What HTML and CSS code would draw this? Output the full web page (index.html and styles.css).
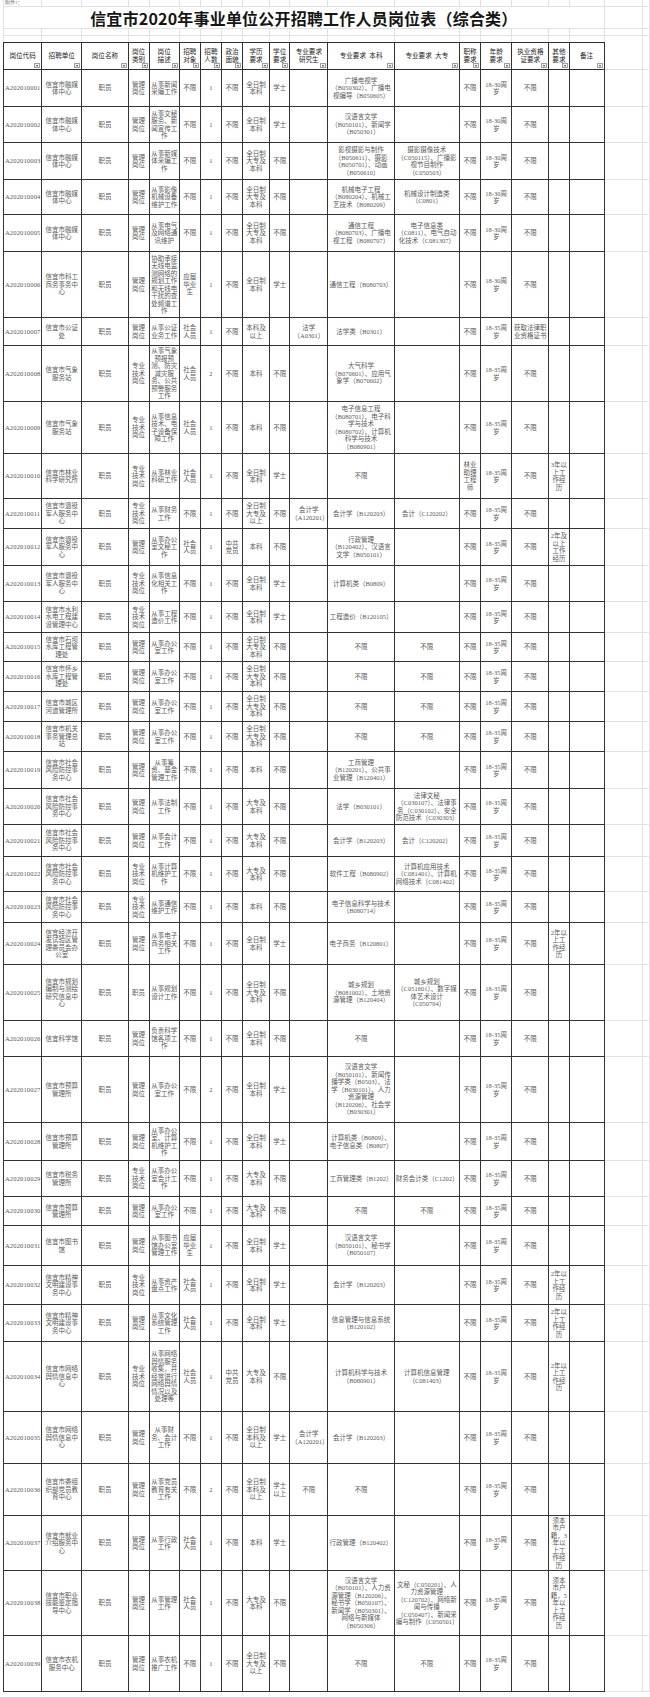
FILE: index.html
```html
<!DOCTYPE html>
<html lang="zh-CN">
<head>
<meta charset="utf-8">
<title>信宜市2020年事业单位公开招聘工作人员岗位表（综合类）</title>
<link rel="stylesheet" href="styles.css">
</head>
<body>
<table class="sheet">
<colgroup>
<col class="c39"><col class="c40"><col class="c46"><col class="c21"><col class="c30"><col class="c21"><col class="c21"><col class="c21"><col class="c27"><col class="c20"><col class="c38"><col class="c66"><col class="c65"><col class="c21"><col class="c31"><col class="c37"><col class="c20"><col class="c35"><col class="c38"><col class="c7">
</colgroup>
<tbody>
<tr class="top h7"><td class="note">附件1：</td><td></td><td></td><td></td><td></td><td></td><td></td><td></td><td></td><td></td><td></td><td></td><td></td><td></td><td></td><td></td><td></td><td></td><td></td><td></td></tr>
<tr class="top h22"><td colspan="18" class="title">信宜市2020年事业单位公开招聘工作人员岗位表（综合类）</td><td></td><td></td></tr>
<tr class="top h7"><td></td><td></td><td></td><td></td><td></td><td></td><td></td><td></td><td></td><td></td><td></td><td></td><td></td><td></td><td></td><td></td><td></td><td></td><td></td><td></td></tr>
<tr class="top last h6"><td></td><td></td><td></td><td></td><td></td><td></td><td></td><td></td><td></td><td></td><td></td><td></td><td></td><td></td><td></td><td></td><td></td><td></td><td></td><td></td></tr>
<tr class="head h28">
<th>岗位代码<span class="flt"></span></th>
<th>招聘单位<span class="flt"></span></th>
<th>岗位名称<span class="flt"></span></th>
<th>岗位<br>类别<span class="flt"></span></th>
<th>岗位<br>描述<span class="flt"></span></th>
<th>招聘<br>对象<span class="flt"></span></th>
<th>招聘<br>人数<span class="flt"></span></th>
<th>政治<br>面貌<span class="flt"></span></th>
<th>学历<br>要求<span class="flt"></span></th>
<th>学位<br>要求<span class="flt"></span></th>
<th>专业要求<br>研究生<span class="flt"></span></th>
<th>专业要求&nbsp;&nbsp;本科<span class="flt"></span></th>
<th>专业要求&nbsp;&nbsp;大专<span class="flt"></span></th>
<th>职称<br>要求<span class="flt"></span></th>
<th>年龄<br>要求<span class="flt"></span></th>
<th>执业资格<br>证要求<span class="flt"></span></th>
<th>其他<br>要求<span class="flt"></span></th>
<th>备注<span class="flt"></span></th>
<td class="x"></td><td class="x"></td>
</tr>
<tr class="row h37"><td class="code">A202010001</td><td>信宜市融媒体中心</td><td>职员</td><td>管理岗位</td><td>从事新闻采编工作</td><td>不限</td><td>1</td><td>不限</td><td>全日制本科</td><td>学士</td><td></td><td>广播电视学（B050302）、广播电视编导（B050605）</td><td></td><td>不限</td><td>18-30周岁</td><td>不限</td><td></td><td></td><td class="x"></td><td class="x"></td></tr>
<tr class="row h36"><td class="code">A202010002</td><td>信宜市融媒体中心</td><td>职员</td><td>管理岗位</td><td>从事文秘服务、新闻宣传工作</td><td>不限</td><td>1</td><td>不限</td><td>全日制本科</td><td>学士</td><td></td><td>汉语言文学（B050101）、新闻学（B050301）</td><td></td><td>不限</td><td>18-30周岁</td><td>不限</td><td></td><td></td><td class="x"></td><td class="x"></td></tr>
<tr class="row h37"><td class="code">A202010003</td><td>信宜市融媒体中心</td><td>职员</td><td>管理岗位</td><td>从事新媒体采编工作</td><td>不限</td><td>1</td><td>不限</td><td>全日制大专及本科</td><td>不限</td><td></td><td>影视摄影与制作（B050611）、摄影（B050701）、动画（B050610）</td><td>摄影摄像技术（C050115）、广播影视节目制作（C050503）</td><td>不限</td><td>18-30周岁</td><td>不限</td><td></td><td></td><td class="x"></td><td class="x"></td></tr>
<tr class="row h35"><td class="code">A202010004</td><td>信宜市融媒体中心</td><td>职员</td><td>管理岗位</td><td>从事影像机械设备维护工作</td><td>不限</td><td>1</td><td>不限</td><td>全日制大专及本科</td><td>不限</td><td></td><td>机械电子工程（B080204）、机械工艺技术（B080209）</td><td>机械设计制造类（C0801）</td><td>不限</td><td>18-30周岁</td><td>不限</td><td></td><td></td><td class="x"></td><td class="x"></td></tr>
<tr class="row h37"><td class="code">A202010005</td><td>信宜市融媒体中心</td><td>职员</td><td>管理岗位</td><td>从事电气及网络通讯维护</td><td>不限</td><td>1</td><td>不限</td><td>全日制大专及本科</td><td>不限</td><td></td><td>通信工程（B080703）、广播电视工程（B080707）</td><td>电子信息类（C0811）、电气自动化技术（C081307）</td><td>不限</td><td>18-30周岁</td><td>不限</td><td></td><td></td><td class="x"></td><td class="x"></td></tr>
<tr class="row h66"><td class="code">A202010006</td><td>信宜市科工商务事务中心</td><td>职员</td><td>管理岗位</td><td>协助承接无线电监测网络的规划工作和无线电干扰的查处频谱工作</td><td>应届毕业生</td><td>1</td><td>不限</td><td>全日制本科</td><td>学士</td><td></td><td class="left">通信工程（B080703）</td><td></td><td>不限</td><td>18-30周岁</td><td>不限</td><td></td><td></td><td class="x"></td><td class="x"></td></tr>
<tr class="row h28"><td class="code">A202010007</td><td>信宜市公证处</td><td>职员</td><td>管理岗位</td><td>从事公证业务工作</td><td>社会人员</td><td>1</td><td>不限</td><td>本科及以上</td><td></td><td>法学（A0301）</td><td>法学类（B0301）</td><td></td><td>不限</td><td>18-35周岁</td><td>获取法律职业资格证书</td><td></td><td></td><td class="x"></td><td class="x"></td></tr>
<tr class="row h56"><td class="code">A202010008</td><td>信宜市气象服务站</td><td>职员</td><td>专业技术岗位</td><td>从事气象预报预测、防灾减灾服务、公共预警服务工作</td><td>社会人员</td><td>2</td><td>不限</td><td>本科</td><td>不限</td><td></td><td>大气科学（B070601）、应用气象学（B070602）</td><td></td><td>不限</td><td>18-35周岁</td><td>不限</td><td></td><td></td><td class="x"></td><td class="x"></td></tr>
<tr class="row h52"><td class="code">A202010009</td><td>信宜市气象服务站</td><td>职员</td><td>专业技术岗位</td><td>从事信息技术、电子设备保障工作</td><td>社会人员</td><td>1</td><td>不限</td><td>本科</td><td>不限</td><td></td><td>电子信息工程（B080701）、电子科学与技术（B080702）、计算机科学与技术（B080901）</td><td></td><td>不限</td><td>18-35周岁</td><td>不限</td><td></td><td></td><td class="x"></td><td class="x"></td></tr>
<tr class="row h45"><td class="code">A202010010</td><td>信宜市林业科学研究所</td><td>职员</td><td>专业技术岗位</td><td>从事林业科研工作</td><td>社会人员</td><td>1</td><td>不限</td><td>全日制本科</td><td>学士</td><td></td><td>不限</td><td></td><td>林业助理工程师</td><td>18-35周岁</td><td>不限</td><td>3年以上工作经历</td><td></td><td class="x"></td><td class="x"></td></tr>
<tr class="row h30"><td class="code">A202010011</td><td>信宜市退役军人服务中心</td><td>职员</td><td>专业技术岗位</td><td>从事财务工作</td><td>不限</td><td>1</td><td>不限</td><td>全日制大专及以上</td><td>不限</td><td>会计学（A120201）</td><td>会计学（B120203）</td><td>会计（C120202）</td><td>不限</td><td>18-35周岁</td><td>不限</td><td></td><td></td><td class="x"></td><td class="x"></td></tr>
<tr class="row h37"><td class="code">A202010012</td><td>信宜市退役军人服务中心</td><td>职员</td><td>管理岗位</td><td>从事办公室文秘工作</td><td>社会人员</td><td>1</td><td>中共党员</td><td>本科</td><td>不限</td><td></td><td>行政管理（B120402）、汉语言文学（B050101）</td><td></td><td>不限</td><td>18-35周岁</td><td>不限</td><td>2年及以上工作经历</td><td></td><td class="x"></td><td class="x"></td></tr>
<tr class="row h36"><td class="code">A202010013</td><td>信宜市退役军人服务中心</td><td>职员</td><td>专业技术岗位</td><td>从事信息化相关工作</td><td>不限</td><td>1</td><td>不限</td><td>全日制本科</td><td>学士</td><td></td><td>计算机类（B0809）</td><td></td><td>不限</td><td>18-35周岁</td><td>不限</td><td></td><td></td><td class="x"></td><td class="x"></td></tr>
<tr class="row h31"><td class="code">A202010014</td><td>信宜市水利水电工程建设管理中心</td><td>职员</td><td>专业技术岗位</td><td>从事工程造价工作</td><td>不限</td><td>1</td><td>不限</td><td>全日制本科</td><td>学士</td><td></td><td>工程造价（B120105）</td><td></td><td>不限</td><td>18-35周岁</td><td>不限</td><td></td><td></td><td class="x"></td><td class="x"></td></tr>
<tr class="row h29"><td class="code">A202010015</td><td>信宜市石坝水库工程管理处</td><td>职员</td><td>管理岗位</td><td>从事办公室工作</td><td>不限</td><td>1</td><td>不限</td><td>全日制大专及本科</td><td>不限</td><td></td><td>不限</td><td>不限</td><td>不限</td><td>18-35周岁</td><td>不限</td><td></td><td></td><td class="x"></td><td class="x"></td></tr>
<tr class="row h30"><td class="code">A202010016</td><td>信宜市怀乡水库工程管理处</td><td>职员</td><td>管理岗位</td><td>从事办公室工作</td><td>不限</td><td>1</td><td>不限</td><td>全日制大专及本科</td><td>不限</td><td></td><td>不限</td><td>不限</td><td>不限</td><td>18-35周岁</td><td>不限</td><td></td><td></td><td class="x"></td><td class="x"></td></tr>
<tr class="row h30"><td class="code">A202010017</td><td>信宜市城区河道管理所</td><td>职员</td><td>管理岗位</td><td>从事办公室工作</td><td>不限</td><td>1</td><td>不限</td><td>全日制大专及本科</td><td>不限</td><td></td><td>不限</td><td>不限</td><td>不限</td><td>18-35周岁</td><td>不限</td><td></td><td></td><td class="x"></td><td class="x"></td></tr>
<tr class="row h30"><td class="code">A202010018</td><td>信宜市机关事务管理总站</td><td>职员</td><td>管理岗位</td><td>从事办公室工作</td><td>不限</td><td>1</td><td>不限</td><td>全日制大专及本科</td><td>不限</td><td></td><td>不限</td><td>不限</td><td>不限</td><td>18-35周岁</td><td>不限</td><td></td><td></td><td class="x"></td><td class="x"></td></tr>
<tr class="row h37"><td class="code">A202010019</td><td>信宜市社会风险防控事务中心</td><td>职员</td><td>管理岗位</td><td>从事筹资、基金管理工作</td><td>不限</td><td>1</td><td>不限</td><td>本科</td><td>不限</td><td></td><td>工商管理（B120201）、公共事业管理（B120401）</td><td></td><td>不限</td><td>18-35周岁</td><td>不限</td><td></td><td></td><td class="x"></td><td class="x"></td></tr>
<tr class="row h36"><td class="code">A202010020</td><td>信宜市社会风险防控事务中心</td><td>职员</td><td>管理岗位</td><td>从事法制工作</td><td>不限</td><td>1</td><td>不限</td><td>大专及本科</td><td>不限</td><td></td><td>法学（B030101）</td><td>法律文秘（C030107）、法律事务（C030102）、安全防范技术（C030303）</td><td>不限</td><td>18-35周岁</td><td>不限</td><td></td><td></td><td class="x"></td><td class="x"></td></tr>
<tr class="row h32"><td class="code">A202010021</td><td>信宜市社会风险防控事务中心</td><td>职员</td><td>管理岗位</td><td>从事会计工作</td><td>不限</td><td>1</td><td>不限</td><td>大专及本科</td><td>不限</td><td></td><td>会计学（B120203）</td><td>会计（C120202）</td><td>不限</td><td>18-35周岁</td><td>不限</td><td></td><td></td><td class="x"></td><td class="x"></td></tr>
<tr class="row h35"><td class="code">A202010022</td><td>信宜市社会风险防控事务中心</td><td>职员</td><td>专业技术岗位</td><td>从事计算机维护工作</td><td>不限</td><td>1</td><td>不限</td><td>大专及本科</td><td>不限</td><td></td><td>软件工程（B080902）</td><td>计算机应用技术（C081401）、计算机网络技术（C081402）</td><td>不限</td><td>18-35周岁</td><td>不限</td><td></td><td></td><td class="x"></td><td class="x"></td></tr>
<tr class="row h31"><td class="code">A202010023</td><td>信宜市社会风险防控事务中心</td><td>职员</td><td>专业技术岗位</td><td>从事通信维护工作</td><td>不限</td><td>1</td><td>不限</td><td>本科</td><td>不限</td><td></td><td>电子信息科学与技术（B080714）</td><td></td><td>不限</td><td>18-35周岁</td><td>不限</td><td></td><td></td><td class="x"></td><td class="x"></td></tr>
<tr class="row h42"><td class="code">A202010024</td><td>信宜经济开发试验区管理委员会办公室</td><td>职员</td><td>管理岗位</td><td>从事电子商务相关工作</td><td>不限</td><td>1</td><td>不限</td><td>全日制本科</td><td>学士</td><td></td><td class="left">电子商务（B120801）</td><td></td><td>不限</td><td>18-35周岁</td><td>不限</td><td>2年以上工作经历</td><td></td><td class="x"></td><td class="x"></td></tr>
<tr class="row h56"><td class="code">A202010025</td><td>信宜市规划编制与测绘研究信息中心</td><td>职员</td><td>职员</td><td>从事规划设计工作</td><td>不限</td><td>1</td><td>不限</td><td>全日制大专及本科</td><td>不限</td><td></td><td>城乡规划（B081002）、土地资源管理（B120404）</td><td>城乡规划（C051601）、数字媒体艺术设计（C050704）</td><td>不限</td><td>18-35周岁</td><td>不限</td><td></td><td></td><td class="x"></td><td class="x"></td></tr>
<tr class="row h36"><td class="code">A202010026</td><td>信宜科学馆</td><td>职员</td><td>管理岗位</td><td>负责科学馆各项工作</td><td>不限</td><td>1</td><td>不限</td><td>全日制本科</td><td>不限</td><td></td><td>不限</td><td></td><td>不限</td><td>18-35周岁</td><td>不限</td><td></td><td></td><td class="x"></td><td class="x"></td></tr>
<tr class="row h66"><td class="code">A202010027</td><td>信宜市预算管理所</td><td>职员</td><td>管理岗位</td><td>从事办公室工作</td><td>不限</td><td>2</td><td>不限</td><td>全日制本科</td><td>学士</td><td></td><td>汉语言文学（B050101）、新闻传播学类（B0503）、法学（B030101）、人力资源管理（B120206）、社会学（B030301）</td><td></td><td>不限</td><td>18-35周岁</td><td>不限</td><td></td><td></td><td class="x"></td><td class="x"></td></tr>
<tr class="row h38"><td class="code">A202010028</td><td>信宜市预算管理所</td><td>职员</td><td>管理岗位</td><td>从事办公室、计算机维护工作</td><td>不限</td><td>1</td><td>不限</td><td>全日制本科</td><td>学士</td><td></td><td>计算机类（B0809）、电子信息类（B0807）</td><td></td><td>不限</td><td>18-35周岁</td><td>不限</td><td></td><td></td><td class="x"></td><td class="x"></td></tr>
<tr class="row h36"><td class="code">A202010029</td><td>信宜市税务管理所</td><td>职员</td><td>专业技术岗位</td><td>从事办公室会计工作</td><td>不限</td><td>1</td><td>不限</td><td>大专及本科</td><td>不限</td><td></td><td>工商管理类（B1202）</td><td>财务会计类（C1202）</td><td>不限</td><td>18-35周岁</td><td>不限</td><td></td><td></td><td class="x"></td><td class="x"></td></tr>
<tr class="row h29"><td class="code">A202010030</td><td>信宜市预算管理所</td><td>职员</td><td>管理岗位</td><td>从事办公室工作</td><td>不限</td><td>1</td><td>不限</td><td>大专及本科</td><td>不限</td><td></td><td>不限</td><td>不限</td><td>不限</td><td>18-35周岁</td><td>不限</td><td></td><td></td><td class="x"></td><td class="x"></td></tr>
<tr class="row h40"><td class="code">A202010031</td><td>信宜市图书馆</td><td>职员</td><td>管理岗位</td><td>从事图书馆办公室管理工作</td><td>应届毕业生</td><td>1</td><td>不限</td><td>全日制本科</td><td>学士</td><td></td><td>汉语言文学（B050101）、秘书学（B050107）</td><td></td><td>不限</td><td>18-35周岁</td><td>不限</td><td></td><td></td><td class="x"></td><td class="x"></td></tr>
<tr class="row h39"><td class="code">A202010032</td><td>信宜市精神文明建设事务中心</td><td>职员</td><td>专业技术岗位</td><td>从事资产盘点工作</td><td>社会人员</td><td>1</td><td>不限</td><td>全日制本科</td><td>学士</td><td></td><td>会计学（B120203）</td><td></td><td>不限</td><td>18-35周岁</td><td>不限</td><td>2年以上工作经历</td><td></td><td class="x"></td><td class="x"></td></tr>
<tr class="row h37"><td class="code">A202010033</td><td>信宜市精神文明建设事务中心</td><td>职员</td><td>管理岗位</td><td>从事文化系统管理工作</td><td>社会人员</td><td>1</td><td>不限</td><td>全日制本科</td><td>学士</td><td></td><td>信息管理与信息系统（B120102）</td><td></td><td>不限</td><td>18-35周岁</td><td>不限</td><td>2年以上工作经历</td><td></td><td class="x"></td><td class="x"></td></tr>
<tr class="row h70"><td class="code">A202010034</td><td>信宜市网络舆情信息中心</td><td>职员</td><td>专业技术岗位</td><td>从事网络舆情服务收集，并经常进行网络舆情情况以及处理等</td><td>社会人员</td><td>1</td><td>中共党员</td><td>大专及本科</td><td>不限</td><td></td><td>计算机科学与技术（B080901）</td><td>计算机信息管理（C081403）</td><td>不限</td><td>18-35周岁</td><td>不限</td><td>2年以上工作经历</td><td></td><td class="x"></td><td class="x"></td></tr>
<tr class="row h52"><td class="code">A202010035</td><td>信宜市网络舆情信息中心</td><td>职员</td><td>管理岗位</td><td>从事财务、会计工作</td><td>不限</td><td>1</td><td>不限</td><td>全日制本科及以上</td><td>学士</td><td>会计学（A120201）</td><td>会计学（B120203）</td><td></td><td>不限</td><td>18-35周岁</td><td>不限</td><td></td><td></td><td class="x"></td><td class="x"></td></tr>
<tr class="row h52"><td class="code">A202010036</td><td>信宜市委组织部党员教育中心</td><td>职员</td><td>管理岗位</td><td>从事党员教育有关工作</td><td>不限</td><td>2</td><td>不限</td><td>全日制本科及以上</td><td>学士以上</td><td>不限</td><td>不限</td><td></td><td>不限</td><td>18-35周岁</td><td>不限</td><td></td><td></td><td class="x"></td><td class="x"></td></tr>
<tr class="row h55"><td class="code">A202010037</td><td>信宜市就业介绍服务中心</td><td>职员</td><td>管理岗位</td><td>从事行政工作</td><td>社会人员</td><td>1</td><td>不限</td><td>本科</td><td>学士</td><td></td><td class="left">行政管理（B120402）</td><td></td><td>不限</td><td>18-35周岁</td><td>不限</td><td>须本市户籍，3年以上工作经历</td><td></td><td class="x"></td><td class="x"></td></tr>
<tr class="row h65"><td class="code">A202010038</td><td>信宜市职业技能鉴定指导中心</td><td>职员</td><td>管理岗位</td><td>从事管理工作</td><td>社会人员</td><td>1</td><td>不限</td><td>大专及本科</td><td>不限</td><td></td><td>汉语言文学（B050101）、人力资源管理（B120206）、秘书学（B050107）、新闻学（B050301）、网络与新媒体（B050306）</td><td>文秘（C050201）、人力资源管理（C120702）、网络新闻与传播（C050407）、新闻采编与制作（C050501）</td><td>不限</td><td>18-35周岁</td><td>不限</td><td>须本市户籍，5年以上工作经历</td><td></td><td class="x"></td><td class="x"></td></tr>
<tr class="row h56"><td class="code">A202010039</td><td>信宜市农机服务中心</td><td>职员</td><td>管理岗位</td><td>从事农机推广工作</td><td>不限</td><td>1</td><td>不限</td><td>全日制大专及以上</td><td>不限</td><td></td><td>不限</td><td>不限</td><td>不限</td><td>18-35周岁</td><td>不限</td><td></td><td></td><td class="x"></td><td class="x"></td></tr>
</tbody>
</table>
</body>
</html>
```

FILE: styles.css
```css
* { box-sizing: border-box; }

body {
  margin: 0;
  background: #ffffff;
  font-family: "Liberation Serif", "Noto Sans CJK SC", serif;
  overflow: hidden;
}

.sheet {
  margin-left: 3px;
  width: 647px;
  table-layout: fixed;
  border-collapse: separate;
  border-spacing: 0;
}

.c39 { width: 39px; }
.c40 { width: 40px; }
.c46 { width: 46px; }
.c21 { width: 21px; }
.c30 { width: 30px; }
.c27 { width: 27px; }
.c20 { width: 20px; }
.c38 { width: 38px; }
.c66 { width: 66px; }
.c65 { width: 65px; }
.c31 { width: 31px; }
.c37 { width: 37px; }
.c35 { width: 35px; }
.c7  { width: 7px; }

.sheet td,
.sheet th {
  padding: 0 1px;
  text-align: center;
  vertical-align: middle;
  font-size: 6.5px;
  line-height: 7.5px;
  color: #5a5a5a;
  font-weight: normal;
  overflow: hidden;
  overflow-wrap: anywhere;
}

/* row heights */
.h6 { height: 6px; }
.h7 { height: 7px; }
.h22 { height: 22px; }
.h28 { height: 28px; }
.h29 { height: 29px; }
.h30 { height: 30px; }
.h31 { height: 31px; }
.h32 { height: 32px; }
.h35 { height: 35px; }
.h36 { height: 36px; }
.h37 { height: 37px; }
.h38 { height: 38px; }
.h39 { height: 39px; }
.h40 { height: 40px; }
.h42 { height: 42px; }
.h45 { height: 45px; }
.h52 { height: 52px; }
.h55 { height: 55px; }
.h56 { height: 56px; }
.h65 { height: 65px; }
.h66 { height: 66px; }
.h70 { height: 70px; }

/* spreadsheet area above the table */
.top td {
  border-right: 1px solid #e1e1e1;
  border-bottom: 1px solid #e1e1e1;
}
.top td:first-child { border-left: 1px solid #e1e1e1; }
.top.last td { border-bottom: none; }

.sheet .note {
  text-align: left;
  vertical-align: top;
  font-size: 5px;
  line-height: 6px;
  color: #777;
  overflow: visible;
  white-space: nowrap;
}

.sheet .title {
  font-family: "Noto Sans CJK SC", sans-serif;
  font-size: 16px;
  line-height: 20px;
  font-weight: 700;
  color: #161616;
  letter-spacing: 0.2px;
  text-align: center;
  overflow: visible;
  white-space: nowrap;
}

/* header */
.head th {
  position: relative;
  color: #1e1e1e;
  font-size: 6.6px;
  line-height: 8px;
  border-top: 1px solid #303030;
  border-right: 1px solid #303030;
  border-bottom: 1px solid #303030;
}
.head th:first-child { border-left: 1px solid #303030; }

.flt {
  position: absolute;
  right: 1px;
  bottom: 1px;
  width: 6px;
  height: 5px;
  border: 1px solid #a0a0a0;
  background: #f2f2f2;
}
.flt::after {
  content: "";
  position: absolute;
  left: 1px;
  top: 1px;
  border-left: 1.5px solid transparent;
  border-right: 1.5px solid transparent;
  border-top: 2px solid #444;
}

/* data rows */
.row td {
  border-right: 1px solid #333;
  border-bottom: 1px solid #333;
}
.row td:first-child { border-left: 1px solid #333; }

.sheet .code {
  font-size: 6.6px;
  letter-spacing: 0.1px;
  white-space: nowrap;
}

.sheet .left { text-align: left; }

/* empty spreadsheet cells to the right of the table */
.sheet td.x {
  border-right: 1px solid #e1e1e1;
  border-bottom: 1px solid #e1e1e1;
  border-left: none;
}
.head td.x {
  border-top: none;
}
```
